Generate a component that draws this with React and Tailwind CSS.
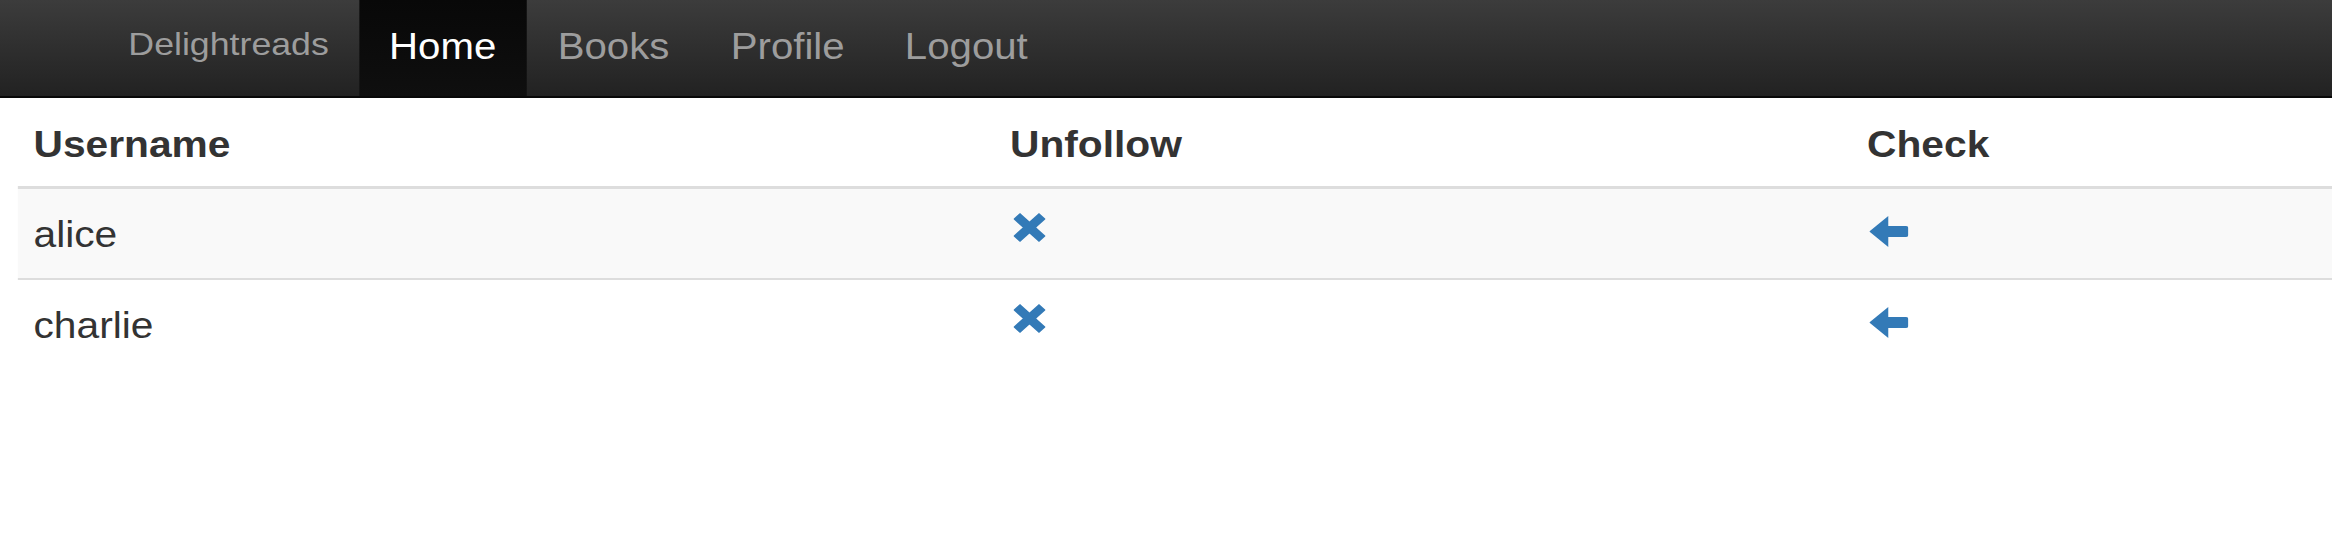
export default function App() {
  const rows = ["alice", "charlie"];
  return (
    <div className="w-full min-h-[546px] overflow-hidden bg-white font-['Liberation_Sans',Arial,sans-serif]">
      <div className="w-[2090px] origin-top-left scale-x-[1.116]">
        <nav className="flex h-[98px] border-b-2 border-[#080808] bg-linear-to-b from-[#3c3c3c] to-[#222222] pl-[88px]">
          <a className="px-[27px] text-[32px] leading-[88px] text-[#9d9d9d]">Delightreads</a>
          <a className="h-[96px] px-[27px] text-[36px] leading-[93px] text-white bg-linear-to-b from-[#080808] to-[#0f0f0f]">Home</a>
          <a className="h-[96px] px-[28px] text-[36px] leading-[93px] text-[#9d9d9d]">Books</a>
          <a className="h-[96px] px-[27px] text-[36px] leading-[93px] text-[#9d9d9d]">Profile</a>
          <a className="h-[96px] px-[27px] text-[36px] leading-[93px] text-[#9d9d9d]">Logout</a>
        </nav>
        <div className="pl-[16px]">
          <div className="grid grid-cols-[875px_768px_1fr] border-b-[3px] border-[#dddddd] text-[#333333]">
            <div className="h-[88px] pt-[27px] pl-[14px] text-[36.5px] leading-[40px] font-bold">Username</div>
            <div className="h-[88px] pt-[27px] pl-[14px] text-[36.5px] leading-[40px] font-bold">Unfollow</div>
            <div className="h-[88px] pt-[27px] pl-[14px] text-[36.5px] leading-[40px] font-bold">Check</div>
          </div>
          {rows.map((name, i) => (
            <div
              key={name}
              className={
                i === 0
                  ? "grid h-[89px] grid-cols-[875px_768px_1fr] bg-[#f9f9f9] text-[#333333]"
                  : "grid h-[91px] grid-cols-[875px_768px_1fr] border-t-2 border-[#dddddd] text-[#333333]"
              }
            >
              <div className="pt-[26px] pl-[14px] text-[36.5px] leading-[40px]">{name}</div>
              <div className="pt-[24px] pl-[13px]">
                <svg className="ml-[4px] block" width="29" height="29" viewBox="0 0 29 29">
                  <path d="M3 3 L26 26 M26 3 L3 26" stroke="#337ab7" strokeWidth="8.5" strokeLinecap="butt" fill="none" />
                </svg>
              </div>
              <div className="pt-[27px] pl-[13px]">
                <svg className="ml-[3px] block" width="35" height="31" viewBox="0 0 35 31">
                  <path d="M0 15.5 L17 0 V10 H33 Q35 10 35 12 V19 Q35 21 33 21 H17 V31 Z" fill="#337ab7" />
                </svg>
              </div>
            </div>
          ))}
        </div>
      </div>
    </div>
  );
}
